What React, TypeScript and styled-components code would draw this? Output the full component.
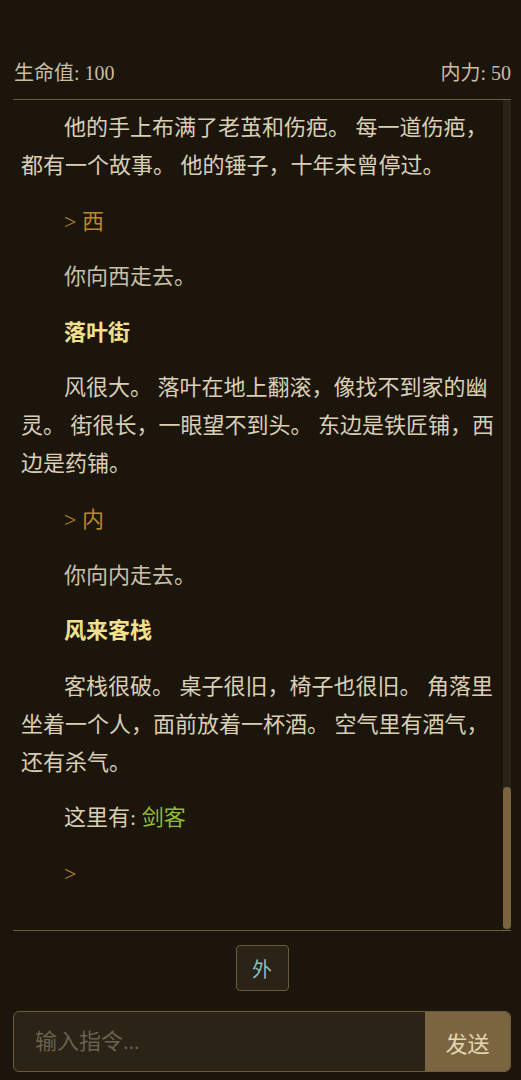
import * as React from 'react';
import { useState } from 'react';
import styled, { createGlobalStyle } from 'styled-components';

type Entry =
  | { kind: 'cmd'; text: string }
  | { kind: 'echo'; text: string }
  | { kind: 'title'; text: string }
  | { kind: 'desc'; text: string }
  | { kind: 'npc'; names: string[] }
  | { kind: 'prompt' };

const GlobalStyle = createGlobalStyle`
  html, body {
    margin: 0;
    padding: 0;
    background: #1c150c;
  }
  * { box-sizing: border-box; }
`;

const Page = styled.div`
  height: 100vh;
  display: flex;
  flex-direction: column;
  padding: 0 10px 8px 13px;
  background: #1c150c;
  color: #d9cfb5;
  font-family: "Liberation Serif", "Noto Sans CJK SC", serif;
`;

const StatusBar = styled.div`
  display: flex;
  justify-content: space-between;
  align-items: center;
  padding: 60px 0 13px 1px;
  font-size: 20px;
  line-height: 26px;
  color: #c9bea3;
  border-bottom: 1px solid #6b5b3f;
`;

const Log = styled.div`
  flex: 1;
  min-height: 0;
  display: flex;
  border-bottom: 1px solid #6b5b3f;
`;

const LogBody = styled.div`
  flex: 1;
  min-width: 0;
  overflow: hidden;
  padding: 9px 4px 20px 8px;
`;

const ScrollTrack = styled.div`
  width: 8px;
  display: flex;
  flex-direction: column;
  justify-content: flex-end;
  padding-bottom: 1px;
  background: #2a2418;
`;

const ScrollThumb = styled.div`
  height: 142px;
  border-radius: 4px;
  background: #7a6540;
`;

const Line = styled.p<{ $tone?: 'cmd' | 'echo' | 'title' | 'desc' }>`
  margin: 0 0 17.6px;
  font-size: 22px;
  line-height: 38px;
  text-indent: ${(p) => (p.$tone === 'desc' ? '43px' : '0')};
  padding-left: ${(p) => (p.$tone === 'desc' ? '0' : '43px')};
  font-weight: ${(p) => (p.$tone === 'title' ? 700 : 400)};
  color: ${(p) =>
    p.$tone === 'cmd'
      ? '#b8892a'
      : p.$tone === 'title'
      ? '#f2e08e'
      : p.$tone === 'echo'
      ? '#c8c0a8'
      : '#d9cfb5'};
`;

const Npc = styled.span`
  color: #8fba3e;
`;

const Footer = styled.div`
  display: flex;
  flex-direction: column;
`;

const QuickBar = styled.div`
  display: flex;
  justify-content: center;
  gap: 10px;
  padding: 14px 0 20px;
`;

const QuickButton = styled.button`
  width: 53px;
  height: 46px;
  background: #2a2316;
  border: 1px solid #6b5b3f;
  border-radius: 4px;
  color: #8cbfc0;
  font-family: "Liberation Serif", "Noto Sans CJK SC", serif;
  font-size: 20px;
  cursor: pointer;
`;

const InputRow = styled.form`
  display: flex;
  height: 61px;
  border: 1px solid #6b5b3f;
  border-radius: 6px;
  overflow: hidden;
  background: #2a2316;
`;

const CommandInput = styled.input`
  flex: 1;
  min-width: 0;
  border: none;
  outline: none;
  background: transparent;
  padding: 0 0 0 21px;
  color: #d9cfb5;
  font-family: "Liberation Serif", "Noto Sans CJK SC", serif;
  font-size: 22px;

  &::placeholder {
    color: #6b6150;
  }
`;

const SendButton = styled.button`
  width: 85px;
  border: none;
  background: #7a6540;
  color: #e4d8b4;
  font-family: "Liberation Serif", "Noto Sans CJK SC", serif;
  font-size: 22px;
  cursor: pointer;
`;

const history: Entry[] = [
  { kind: 'desc', text: '他的手上布满了老茧和伤疤。 每一道伤疤，都有一个故事。 他的锤子，十年未曾停过。' },
  { kind: 'cmd', text: '> 西' },
  { kind: 'echo', text: '你向西走去。' },
  { kind: 'title', text: '落叶街' },
  { kind: 'desc', text: '风很大。 落叶在地上翻滚，像找不到家的幽灵。 街很长，一眼望不到头。 东边是铁匠铺，西边是药铺。' },
  { kind: 'cmd', text: '> 内' },
  { kind: 'echo', text: '你向内走去。' },
  { kind: 'title', text: '风来客栈' },
  { kind: 'desc', text: '客栈很破。 桌子很旧，椅子也很旧。 角落里坐着一个人，面前放着一杯酒。 空气里有酒气，还有杀气。' },
  { kind: 'npc', names: ['剑客'] },
  { kind: 'prompt' },
];

const renderEntry = (e: Entry, i: number) => {
  switch (e.kind) {
    case 'cmd':
      return <Line key={i} $tone="cmd">{e.text}</Line>;
    case 'echo':
      return <Line key={i} $tone="echo">{e.text}</Line>;
    case 'title':
      return <Line key={i} $tone="title">{e.text}</Line>;
    case 'desc':
      return <Line key={i} $tone="desc">{e.text}</Line>;
    case 'npc':
      return (
        <Line key={i}>
          这里有: <Npc>{e.names.join('、')}</Npc>
        </Line>
      );
    default:
      return <Line key={i} $tone="cmd">&gt;</Line>;
  }
};

export default function App() {
  const [command, setCommand] = useState('');

  return (
    <>
      <GlobalStyle />
      <Page>
        <StatusBar>
          <span>生命值: 100</span>
          <span>内力: 50</span>
        </StatusBar>

        <Log>
          <LogBody>{history.map(renderEntry)}</LogBody>
          <ScrollTrack>
            <ScrollThumb />
          </ScrollTrack>
        </Log>

        <Footer>
          <QuickBar>
            <QuickButton type="button">外</QuickButton>
          </QuickBar>
          <InputRow onSubmit={(e) => { e.preventDefault(); setCommand(''); }}>
            <CommandInput
              placeholder="输入指令..."
              value={command}
              onChange={(e) => setCommand(e.target.value)}
            />
            <SendButton type="submit">发送</SendButton>
          </InputRow>
        </Footer>
      </Page>
    </>
  );
}
